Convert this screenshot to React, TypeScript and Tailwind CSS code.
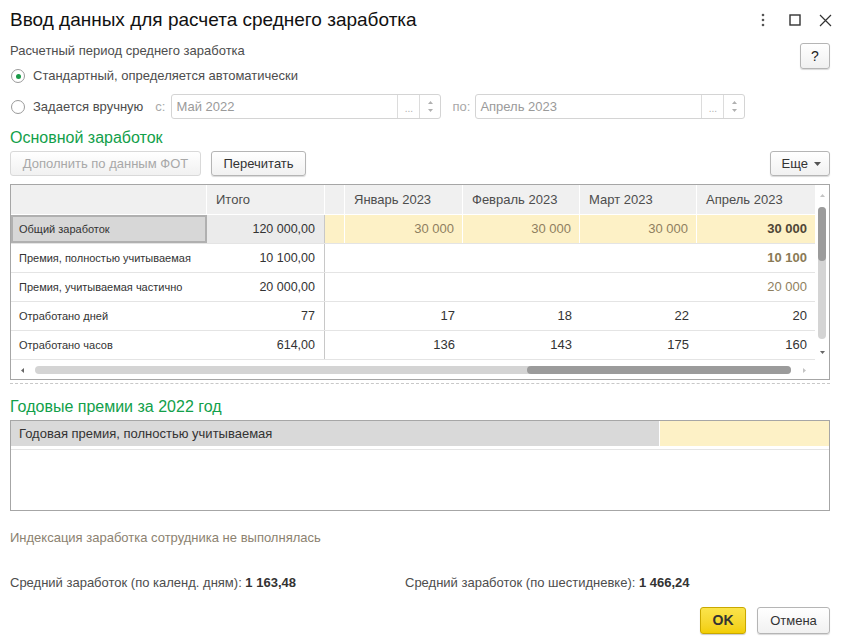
import React from "react";

type Row = {
  label: string;
  total: string;
  months: string[];
  tone: "yellow" | "brown" | "plain";
  boldLast?: boolean;
  selected?: boolean;
};

const MONTHS = ["Январь 2023", "Февраль 2023", "Март 2023", "Апрель 2023"];

const ROWS: Row[] = [
  { label: "Общий заработок", total: "120 000,00", months: ["30 000", "30 000", "30 000", "30 000"], tone: "yellow", boldLast: true, selected: true },
  { label: "Премия, полностью учитываемая", total: "10 100,00", months: ["", "", "", "10 100"], tone: "brown", boldLast: true },
  { label: "Премия, учитываемая частично", total: "20 000,00", months: ["", "", "", "20 000"], tone: "brown" },
  { label: "Отработано дней", total: "77", months: ["17", "18", "22", "20"], tone: "plain" },
  { label: "Отработано часов", total: "614,00", months: ["136", "143", "175", "160"], tone: "plain" },
];

const Btn: React.FC<{ children: React.ReactNode; disabled?: boolean; className?: string }> = ({ children, disabled, className }) => (
  <button
    type="button"
    className={[
      "h-[25px] rounded-[3px] border px-[6px] whitespace-nowrap text-[13px] bg-gradient-to-b from-white to-[#f1f1f1]",
      disabled
        ? "border-[#d9d9d9] text-[#a8a8a8]"
        : "border-[#b5b5b5] text-[#333] shadow-[0_1px_1px_rgba(0,0,0,0.15)]",
      className || "",
    ].join(" ")}
  >
    {children}
  </button>
);

const Radio: React.FC<{ checked?: boolean }> = ({ checked }) => (
  <span className="w-[14px] h-[14px] rounded-full border border-[#9a9a9a] bg-white flex items-center justify-center shrink-0">
    {checked && <span className="w-[5px] h-[5px] rounded-full bg-[#1a9a48]" />}
  </span>
);

const Spin = () => (
  <div className="w-[21px] h-full border-l border-[#dcdcdc] flex flex-col items-center justify-center gap-[5px]">
    <svg width="5" height="3" viewBox="0 0 5 3"><path d="M0 3 L2.5 0 L5 3 Z" fill="#b0b0b0" /></svg>
    <svg width="5" height="3" viewBox="0 0 5 3"><path d="M0 0 L5 0 L2.5 3 Z" fill="#b0b0b0" /></svg>
  </div>
);

const DateField: React.FC<{ value: string }> = ({ value }) => (
  <div className="w-[270px] h-[25px] border border-[#d4d4d4] rounded-[3px] flex items-stretch bg-white">
    <div className="flex-1 pl-[4px] flex items-center text-[13px] text-[#9a9a9a]">{value}</div>
    <div className="w-[22px] border-l border-[#dcdcdc] flex items-center justify-center text-[10px] text-[#b0b0b0] pt-[3px]">...</div>
    <Spin />
  </div>
);

function cellText(row: Row, i: number) {
  const last = i === 3;
  if (row.tone === "plain") return "text-[#333]";
  if (row.boldLast && last) return row.tone === "yellow" ? "text-[#4f4636] font-bold" : "text-[#8a7a55] font-bold";
  return "text-[#8f7f60]";
}

export default function App() {
  return (
    <div
      className="w-[846px] h-[644px] bg-white px-[10px] flex flex-col overflow-hidden"
      style={{ fontFamily: '"Liberation Sans", Arial, sans-serif' }}
    >
      {/* title bar */}
      <div className="h-[40px] pt-[8px] flex items-start justify-between">
        <div className="text-[19px] leading-[24px] text-[#111]">Ввод данных для расчета среднего заработка</div>
        <div className="flex items-center gap-[18px] h-[24px] pr-[4px]">
          <svg width="4" height="14" viewBox="0 0 4 14">
            <circle cx="2" cy="2" r="1.3" fill="#555" />
            <circle cx="2" cy="7" r="1.3" fill="#555" />
            <circle cx="2" cy="12" r="1.3" fill="#555" />
          </svg>
          <svg width="12" height="12" viewBox="0 0 12 12" className="ml-[6px]">
            <rect x="1" y="1" width="10" height="10" fill="none" stroke="#333" strokeWidth="1.4" />
          </svg>
          <svg width="13" height="13" viewBox="0 0 13 13">
            <path d="M1 1 L12 12 M12 1 L1 12" stroke="#333" strokeWidth="1.2" />
          </svg>
        </div>
      </div>

      {/* period */}
      <div className="mt-[3px] flex">
        <div className="flex-1 flex flex-col">
          <div className="h-[16px] leading-[16px] text-[13px] text-[#4d4d4d]">Расчетный период среднего заработка</div>
          <div className="mt-[7px] h-[20px] flex items-center gap-[8px] pl-[1px] text-[13px] text-[#4d4d4d]">
            <Radio checked />
            <span>Стандартный, определяется автоматически</span>
          </div>
          <div className="mt-[8px] h-[25px] flex items-center pl-[1px] text-[13px]">
            <Radio />
            <span className="ml-[8px] text-[#4d4d4d]">Задается вручную</span>
            <span className="ml-[12px] mr-[6px] text-[#a8a8a8]">с:</span>
            <DateField value="Май 2022" />
            <span className="ml-[11px] mr-[5px] text-[#a8a8a8]">по:</span>
            <DateField value="Апрель 2023" />
          </div>
        </div>
        <button
          type="button"
          className="w-[30px] h-[26px] mr-[6px] rounded-[3px] border border-[#b5b5b5] bg-gradient-to-b from-white to-[#f0f0f0] text-[14px] text-[#222] shadow-[0_1px_1px_rgba(0,0,0,0.15)]"
        >
          ?
        </button>
      </div>

      {/* main earnings */}
      <div className="mt-[9px] h-[20px] leading-[20px] text-[16px] text-[#12a04a]">Основной заработок</div>
      <div className="mt-[3px] flex items-center gap-[10px] mr-[6px]">
        <Btn disabled className="w-[191px]">Дополнить по данным ФОТ</Btn>
        <Btn className="w-[95px]">Перечитать</Btn>
        <div className="flex-1" />
        <Btn className="w-[60px] px-[8px] flex items-center justify-end gap-[6px]">
          <span>Еще</span>
          <svg width="7" height="4" viewBox="0 0 7 4"><path d="M0 0 L7 0 L3.5 4 Z" fill="#555" /></svg>
        </Btn>
      </div>

      {/* table */}
      <div className="mt-[8px] w-[820px] h-[196px] border border-[#a6a6a6] flex flex-col">
        <div className="flex h-[176px]">
          <div className="w-[804px] flex flex-col text-[11px]">
            {/* header */}
            <div className="grid grid-cols-[196px_118px_20px_118px_117px_117px_118px] h-[30px] bg-[#f0f0f0] border-b border-white">
              <div className="border-r border-white" />
              <div className="border-r border-white flex items-center pl-[9px] text-[13px] text-[#4d4d4d]">Итого</div>
              <div className="border-r border-white" />
              {MONTHS.map((m, i) => (
                <div key={m} className={["flex items-center pl-[9px] text-[13px] text-[#4d4d4d]", i < 3 ? "border-r border-white" : ""].join(" ")}>
                  {m}
                </div>
              ))}
            </div>
            {/* rows */}
            {ROWS.map((r) => {
              const yellow = r.tone === "yellow";
              return (
                <div key={r.label} className="grid grid-cols-[196px_118px_20px_118px_117px_117px_118px] h-[29px] border-b border-[#e4e4e4]">
                  <div
                    className={[
                      "flex items-center text-[#333]",
                      r.selected ? "bg-[#d7d7d7] border-2 border-[#b0b0b0] pl-[6px]" : "pl-[8px]",
                    ].join(" ")}
                  >
                    {r.label}
                  </div>
                  <div
                    className={[
                      "flex items-center justify-end pr-[9px] text-[12.5px] text-[#333] border-r border-[#c8c8c8]",
                      r.selected ? "bg-[#ebebeb]" : "",
                    ].join(" ")}
                  >
                    {r.total}
                  </div>
                  <div className={yellow ? "bg-[#fdf1c6] border-r border-white" : ""} />
                  {r.months.map((v, i) => (
                    <div
                      key={i}
                      className={[
                        "flex items-center justify-end pr-[8px] text-[13px]",
                        cellText(r, i),
                        yellow ? "bg-[#fdf1c6]" : "",
                        yellow && i < 3 ? "border-r border-white" : "",
                      ].join(" ")}
                    >
                      {v}
                    </div>
                  ))}
                </div>
              );
            })}
          </div>
          {/* vertical scrollbar */}
          <div className="w-[14px] flex flex-col items-center">
            <svg width="5" height="3" viewBox="0 0 5 3" className="mt-[9px]"><path d="M0 3 L2.5 0 L5 3 Z" fill="#c4c4c4" /></svg>
            <div className="mt-[10px] w-[8px] h-[132px] rounded-full bg-[#d4d4d4] flex flex-col">
              <div className="h-[54px] rounded-full bg-[#9b9b9b]" />
            </div>
            <svg width="5" height="3" viewBox="0 0 5 3" className="mt-[12px]"><path d="M0 0 L5 0 L2.5 3 Z" fill="#666" /></svg>
          </div>
        </div>
        {/* horizontal scrollbar */}
        <div className="h-[18px] flex items-center">
          <svg width="3" height="5" viewBox="0 0 3 5" className="ml-[10px]"><path d="M3 0 L3 5 L0 2.5 Z" fill="#666" /></svg>
          <div className="ml-[11px] w-[756px] h-[8px] rounded-full bg-[#d4d4d4] flex justify-end">
            <div className="w-[264px] h-full rounded-full bg-[#9b9b9b]" />
          </div>
          <svg width="3" height="5" viewBox="0 0 3 5" className="ml-[12px]"><path d="M0 0 L3 2.5 L0 5 Z" fill="#c4c4c4" /></svg>
        </div>
      </div>

      <div className="mt-[3px] w-[820px] border-t border-dashed border-[#c8c8c8]" />

      {/* annual bonuses */}
      <div className="mt-[13px] h-[20px] leading-[20px] text-[16px] text-[#12a04a]">Годовые премии за 2022 год</div>
      <div className="mt-[3px] w-[820px] h-[91px] border border-[#a6a6a6] flex flex-col">
        <div className="h-[28px] flex border-b-[3px] border-b-white">
          <div className="w-[649px] bg-[#d9d9d9] border-r border-white flex items-center pl-[8px] text-[13px] text-[#333]">
            Годовая премия, полностью учитываемая
          </div>
          <div className="flex-1 bg-[#fdf1c6]" />
        </div>
        <div className="border-t border-[#e4e4e4]" />
      </div>

      <div className="mt-[19px] h-[16px] leading-[16px] text-[13px] text-[#8c8270]">Индексация заработка сотрудника не выполнялась</div>

      <div className="mt-[29px] h-[16px] leading-[16px] flex text-[13px] text-[#4d4d4d]">
        <div className="w-[395px]">
          Средний заработок (по календ. дням): <span className="font-bold text-[#333]">1 163,48</span>
        </div>
        <div>
          Средний заработок (по шестидневке): <span className="font-bold text-[#333]">1 466,24</span>
        </div>
      </div>

      <div className="mt-[16px] flex justify-end gap-[11px] mr-[6px]">
        <button
          type="button"
          className="w-[46px] h-[27px] rounded-[3px] border border-[#c9a800] bg-gradient-to-b from-[#fbe44a] to-[#f2ce00] text-[14px] font-bold text-[#333] shadow-[0_1px_1px_rgba(0,0,0,0.2)]"
        >
          OK
        </button>
        <button
          type="button"
          className="w-[73px] h-[27px] rounded-[3px] border border-[#b5b5b5] bg-gradient-to-b from-white to-[#f1f1f1] text-[13px] text-[#333] shadow-[0_1px_1px_rgba(0,0,0,0.15)]"
        >
          Отмена
        </button>
      </div>
    </div>
  );
}
